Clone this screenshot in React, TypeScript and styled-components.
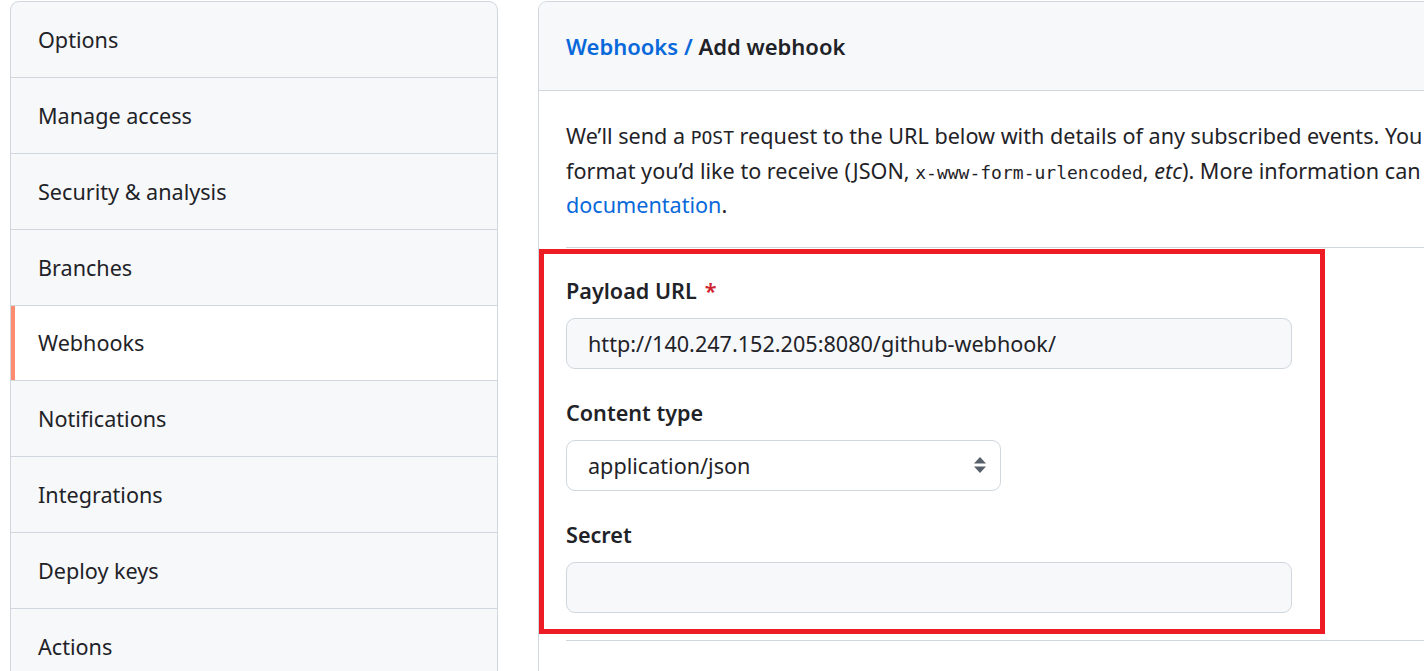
import React from "react";
import styled, { createGlobalStyle } from "styled-components";

const Global = createGlobalStyle`
  html, body { margin: 0; padding: 0; background: #ffffff; overflow: hidden; }
  body {
    font-family: "Noto Sans", "Open Sans", sans-serif;
    color: #1f2328;
    font-size: 21.6px;
  }
`;

const Page = styled.div`
  display: flex;
  align-items: flex-start;
  gap: 40px;
  padding: 1px 0 0 10px;
  width: 1900px;
  height: 671px;
  overflow: hidden;
`;

const Sidebar = styled.nav`
  width: 486px;
  flex: none;
  border: 1px solid #d0d7de;
  border-radius: 9px;
  background: #f6f8fa;
  overflow: hidden;
`;

const MenuItem = styled.a<{ $active?: boolean }>`
  position: relative;
  display: flex;
  align-items: center;
  height: 74.88px;
  padding-left: 27px;
  color: #1f2328;
  text-decoration: none;
  background: ${(p) => (p.$active ? "#ffffff" : "transparent")};
  & + & { border-top: 1px solid #d0d7de; }
  &::before {
    content: "";
    display: ${(p) => (p.$active ? "block" : "none")};
    position: absolute;
    left: 0;
    top: 0;
    bottom: 0;
    width: 4px;
    background: #fd8c73;
  }
`;

const Main = styled.section`
  width: 1280px;
  min-height: 760px;
  flex: none;
  border: 1px solid #d0d7de;
  border-radius: 9px;
  background: #ffffff;
`;

const Header = styled.header`
  height: 88px;
  display: flex;
  align-items: center;
  padding-left: 27px;
  background: #f6f8fa;
  border-bottom: 1px solid #d0d7de;
  border-radius: 9px 9px 0 0;
`;

const Title = styled.h2`
  margin: 0;
  font-size: 22px;
  font-weight: 600;
  color: #1f2328;
`;

const Crumb = styled.a`
  color: #0969da;
  text-decoration: none;
`;

const Body = styled.div`
  padding: 0 0 0 27px;
`;

const Intro = styled.p`
  margin: 0;
  padding: 28px 0 24px;
  line-height: 34.5px;
  white-space: nowrap;
  border-bottom: 1px solid #d0d7de;
`;

const Code = styled.code`
  font-family: "DejaVu Sans Mono", "Liberation Mono", monospace;
  font-size: 18px;
  line-height: 1;
`;

const Link = styled.a`
  color: #0969da;
  text-decoration: none;
`;

const FormArea = styled.div`
  position: relative;
  padding: 28px 0 27px;
  border-bottom: 1px solid #d0d7de;
`;

const Field = styled.div`
  & + & { margin-top: 29px; }
`;

const Label = styled.label`
  display: block;
  font-weight: 600;
  line-height: 30px;
  margin-bottom: 12px;
`;

const Required = styled.span`
  color: #cf222e;
  margin-left: 8px;
`;

const TextInput = styled.div<{ $width: number }>`
  box-sizing: border-box;
  width: ${(p) => p.$width}px;
  height: 51px;
  display: flex;
  align-items: center;
  padding: 0 21px;
  background: #f6f8fa;
  border: 1px solid #d0d7de;
  border-radius: 9px;
  color: #1f2328;
`;

const SelectBox = styled.div`
  box-sizing: border-box;
  width: 435px;
  height: 51px;
  display: flex;
  align-items: center;
  justify-content: space-between;
  padding: 0 13px 0 21px;
  background: #ffffff;
  border: 1px solid #d0d7de;
  border-radius: 9px;
`;

const Annotation = styled.div`
  position: absolute;
  left: -27px;
  top: 1px;
  width: 786px;
  height: 385px;
  box-sizing: border-box;
  border: 5px solid #ed1c24;
  pointer-events: none;
`;

const items = [
  "Options",
  "Manage access",
  "Security & analysis",
  "Branches",
  "Webhooks",
  "Notifications",
  "Integrations",
  "Deploy keys",
  "Actions",
];

const Arrows = () => (
  <svg width="14" height="18" viewBox="0 0 14 18" aria-hidden="true">
    <path d="M7 1 L13 7.5 H1 Z" fill="#57606a" />
    <path d="M1 10.5 H13 L7 17 Z" fill="#57606a" />
  </svg>
);

export default function App() {
  return (
    <>
      <Global />
      <Page>
        <Sidebar>
          {items.map((it) => (
            <MenuItem key={it} $active={it === "Webhooks"}>
              {it}
            </MenuItem>
          ))}
        </Sidebar>
        <Main>
          <Header>
            <Title>
              <Crumb>Webhooks</Crumb> <Crumb as="span">/</Crumb> Add webhook
            </Title>
          </Header>
          <Body>
            <Intro>
              We’ll send a <Code>POST</Code> request to the URL below with details of any subscribed events. You can also specify which data
              <br />
              format you’d like to receive (JSON, <Code>x-www-form-urlencoded</Code>, <em>etc</em>). More information can be found in our developer
              <br />
              <Link>documentation</Link>.
            </Intro>
            <FormArea>
              <Field>
                <Label>
                  Payload URL<Required>*</Required>
                </Label>
                <TextInput $width={726}>http://140.247.152.205:8080/github-webhook/</TextInput>
              </Field>
              <Field>
                <Label>Content type</Label>
                <SelectBox>
                  <span>application/json</span>
                  <Arrows />
                </SelectBox>
              </Field>
              <Field>
                <Label>Secret</Label>
                <TextInput $width={726} />
              </Field>
              <Annotation />
            </FormArea>
          </Body>
        </Main>
      </Page>
    </>
  );
}
